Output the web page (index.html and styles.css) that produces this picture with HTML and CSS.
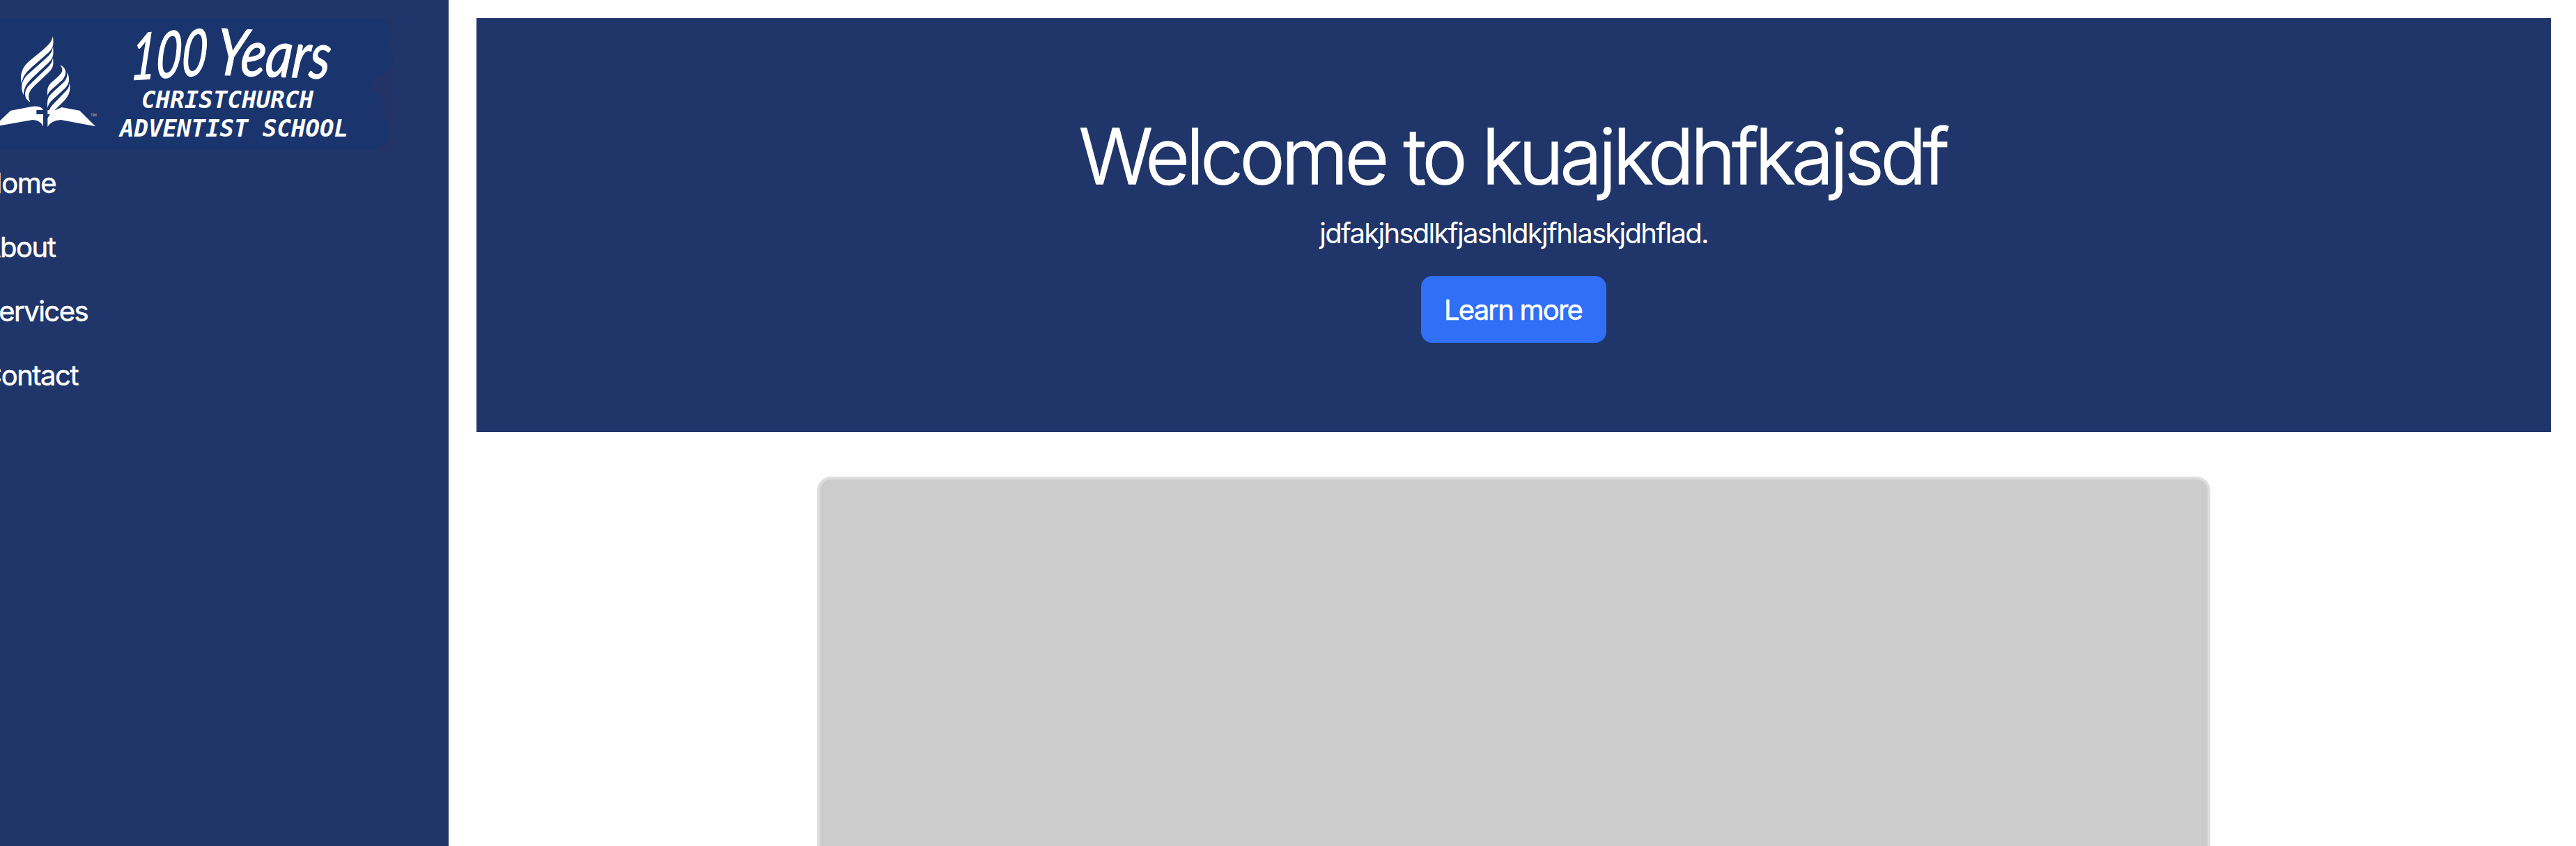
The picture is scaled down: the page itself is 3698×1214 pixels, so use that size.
FILE: index.html
```html
<!DOCTYPE html>
<html lang="en">
<head>
<meta charset="utf-8">
<title>Christchurch Adventist School</title>
<link rel="stylesheet" href="styles.css">
</head>
<body>
<div class="layout">
  <aside class="sidebar">
    <svg class="logo" viewBox="0 26 644 190" role="img" aria-label="100 Years Christchurch Adventist School">
      <path fill="#243366" d="M530 26H564V216H530Z"/>
      <path fill="#1a356e" d="M0 26H548Q562 34 562 50Q562 58 557 62Q564 70 564 84Q565 98 556 103Q546 108 544 112Q538 115 533 114Q536 122 536 131Q550 136 550 150L549 165Q560 175 560 188Q560 205 544 212L544 216H0Z"/>
      <g fill="#fff" transform="scale(.33333)">
        <path d="M228 156C232 192 230 206 208 227L134 292C108 316 98 332 93 361C84 318 96 292 122 266L188 212C212 190 222 180 228 156Z"/>
        <path d="M228 202C232 236 230 250 208 271L142 332C114 360 104 374 101 409C88 378 92 350 116 324L190 258C214 238 224 226 228 202Z"/>
        <path d="M228 248C232 280 228 294 210 311L152 366C122 394 118 412 130 440C104 426 100 394 124 368L192 302C214 282 224 272 228 248Z"/>
        <path d="M259 280C288 292 290 320 268 345L228 380C214 392 208 400 205 412C202 382 206 370 222 355L250 330C274 308 272 298 259 280Z"/>
        <path d="M290 311C302 340 300 358 280 380L226 430C212 443 208 452 205 466C202 430 206 418 222 402L268 360C286 343 290 332 290 311Z"/>
        <path d="M299 358C306 388 298 410 278 432L236 474H212C216 464 222 456 230 448L274 402C290 387 298 378 299 358Z"/>
        <path d="M0 520L46 476L140 458Q180 456 186 474H157V492H186V545Q176 518 140 516L0 541Z"/>
        <path d="M205 474H238L266 462L343 476L411 544L262 516Q218 520 205 546V510Q208 502 216 492H205Z"/>
      </g>
      <text class="logo-tm" x="130" y="167">TM</text>
      <text class="logo-script" transform="translate(186 115) rotate(-4) skewX(-8)" textLength="110" lengthAdjust="spacingAndGlyphs">100</text>
      <text class="logo-script" transform="translate(308 107) rotate(2) skewX(-4)" textLength="164" lengthAdjust="spacingAndGlyphs">Years</text>
      <text class="logo-name" x="203" y="155" textLength="247">CHRISTCHURCH</text>
      <text class="logo-name" x="172" y="195.500" textLength="328">ADVENTIST SCHOOL</text>
    </svg>
    <nav class="nav">
      <a class="nav-link">Home</a>
      <a class="nav-link">About</a>
      <a class="nav-link">Services</a>
      <a class="nav-link">Contact</a>
    </nav>
  </aside>
  <main class="main">
    <section class="hero">
      <h1 class="hero-title">Welcome to kuajkdhfkajsdf</h1>
      <p class="hero-lead">jdfakjhsdlkfjashldkjfhlaskjdhflad.</p>
      <a class="btn">Learn more</a>
    </section>
    <div class="panel"></div>
  </main>
</div>
</body>
</html>
```
FILE: styles.css
```css
* { box-sizing: border-box; }
body {
  margin: 0;
  background: #fff;
  color: #fff;
  font-family: Inter, "Liberation Sans", sans-serif;
  overflow: hidden;
}
.layout { display: flex; height: 1214px; overflow: hidden; }
.sidebar { flex: 0 0 644px; padding-top: 26px; background: #203569; overflow: hidden; }
.logo { display: block; width: 644px; height: 190px; }
.logo text { fill: #fff; }
.logo-tm { font: 6px "Liberation Sans", sans-serif; opacity: .7; }
.logo-script { font: italic 92px Lato, cursive; stroke: #fff; stroke-width: 1.5px; }
.logo-name { font: italic bold 34px "DejaVu Sans Mono", monospace; }
.nav { display: flex; flex-direction: column; margin: 1px 0 0 -26px; }
.nav-link { height: 92px; line-height: 92px; font-size: 40px; letter-spacing: -1.5px; -webkit-text-stroke: .5px #fff; }
.main { flex: 1; padding: 26px 36px 0 40px; }
.hero {
  display: flex;
  flex-direction: column;
  align-items: center;
  height: 594px;
  padding-top: 128px;
  background: #203569;
}
.hero-title { margin: 0; padding-right: 4px; font-size: 110px; font-weight: 300; line-height: 140px; letter-spacing: -5.2px; white-space: nowrap; -webkit-text-stroke: 1.6px #fff; }
.hero-lead { margin: 11px 0 31px; font-size: 40px; font-weight: 400; line-height: 60px; letter-spacing: -1.7px; }
.btn {
  width: 266px;
  height: 96px;
  padding-right: 2px;
  border-radius: 16px;
  background: #306ff6;
  font-size: 40px;
  line-height: 97px;
  text-align: center;
  letter-spacing: -1.8px;
  -webkit-text-stroke: .5px #fff;
}
.panel { width: 2000px; height: 800px; margin: 64px auto 0; border: 4px solid #ddd; border-radius: 20px; background: #ccc; }
```
